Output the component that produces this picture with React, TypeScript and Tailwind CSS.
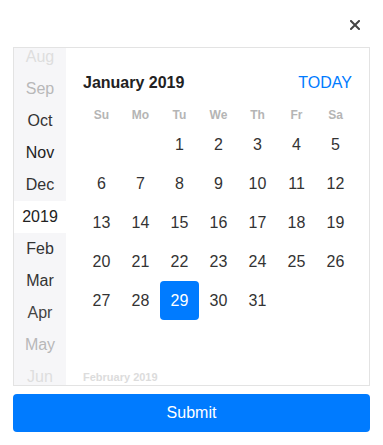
import React from "react"

const months = [
    { label: "Aug", color: "text-[#dedede]" },
    { label: "Sep", color: "text-[#b8b8b8]" },
    { label: "Oct", color: "text-[#333]" },
    { label: "Nov", color: "text-[#222]" },
    { label: "Dec", color: "text-[#333]" },
    { label: "2019", color: "text-[#222]", year: true },
    { label: "Feb", color: "text-[#333]" },
    { label: "Mar", color: "text-[#333]" },
    { label: "Apr", color: "text-[#444]" },
    { label: "May", color: "text-[#b8b8b8]" },
    { label: "Jun", color: "text-[#dedede]" },
]

const weekdays = ["Su", "Mo", "Tu", "We", "Th", "Fr", "Sa"]

// January 2019 starts on a Tuesday
const days: (number | null)[] = [null, null, ...Array.from({ length: 31 }, (_, i) => i + 1)]

export default function App() {
    return (
        <div className="w-[383px] h-[445px] bg-white px-[13px] font-['Liberation_Sans',Arial,sans-serif]">
            <div className="flex justify-end h-[47px] pt-[20px] pr-[10px]">
                <button title="Close" className="w-[10px] h-[10px]">
                    <svg viewBox="0 0 10 10" width="10" height="10">
                        <path d="M1 1 L9 9 M9 1 L1 9" stroke="#444" strokeWidth="2" strokeLinecap="square" />
                    </svg>
                </button>
            </div>

            <div className="flex h-[339px] border border-[#e3e3e3] overflow-hidden">
                <div className="w-[52px] bg-[#f6f6f8] overflow-hidden">
                    <div className="-mt-[7px]">
                        {months.map((m) => (
                            <div key={m.label} className={`h-[32px] flex items-center justify-center text-[16px] ${m.color} ${m.year ? "bg-white" : ""}`}>
                                {m.label}
                            </div>
                        ))}
                    </div>
                </div>

                <div className="flex-1 pl-4 pr-[15px] overflow-hidden">
                    <div className="flex justify-between items-center h-[24px] mt-[23px] pl-px">
                        <h2 className="text-[16px] font-bold text-[#222]">January 2019</h2>
                        <button className="text-[16px] text-[#007bff] pr-[2px]">TODAY</button>
                    </div>
                    <div className="grid grid-cols-[repeat(7,39px)] mt-[9px]">
                        {weekdays.map((d) => (
                            <div key={d} className="h-[21px] flex items-center justify-center text-[12px] font-bold text-[#b5b5b5]">{d}</div>
                        ))}
                        {days.map((d, i) => (
                            <div key={i} className="h-[39px] flex items-center justify-center">
                                {d && (
                                    <span className={`w-[39px] h-[39px] flex items-center justify-center text-[16px] rounded ${d === 29 ? "bg-[#007bff] text-white" : "text-[#333]"}`}>
                                        {d}
                                    </span>
                                )}
                            </div>
                        ))}
                    </div>
                    <div className="mt-[49px] pl-px text-[11px] font-bold text-[#dcdcdc]">February 2019</div>
                </div>
            </div>

            <button type="submit" className="mt-[8px] w-full h-[38px] rounded bg-[#007bff] text-white text-[16px]">
                Submit
            </button>
        </div>
    )
}
